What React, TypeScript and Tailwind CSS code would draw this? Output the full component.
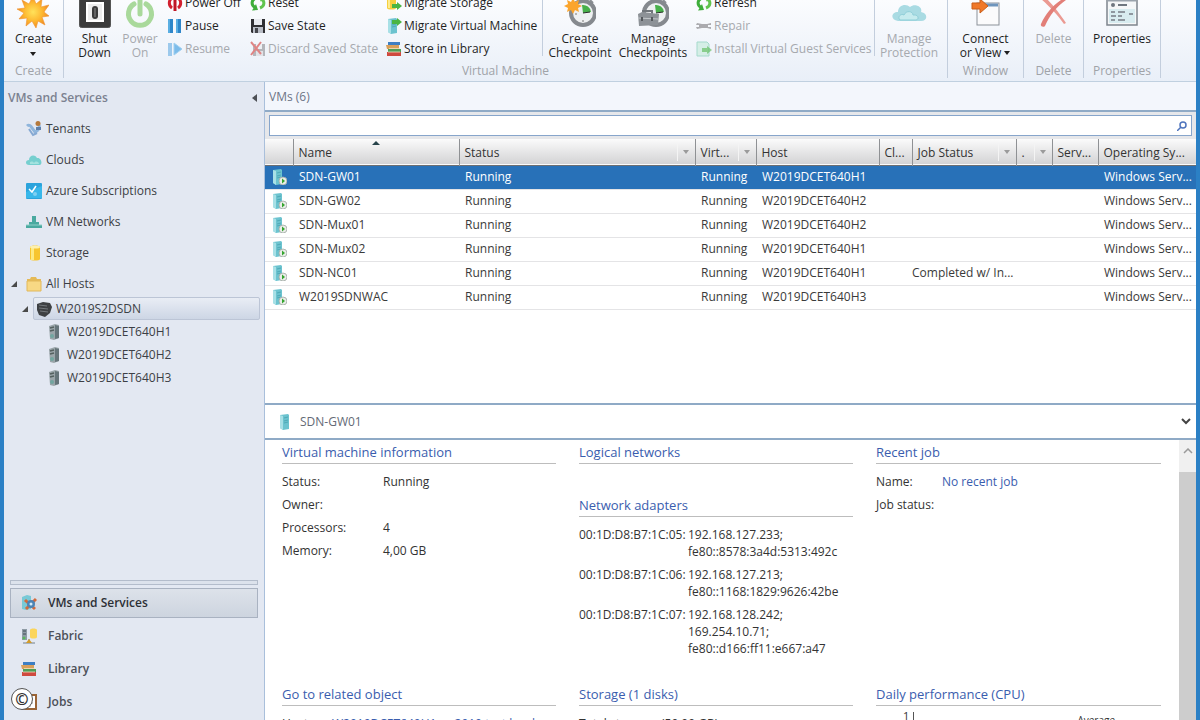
import { useState, type ReactNode } from 'react'

// ═══════════════════════════════════════════════════════════════════
// DATA
// ═══════════════════════════════════════════════════════════════════

const VMS = [
  { name: 'SDN-GW01', host: 'W2019DCET640H1', job: '' },
  { name: 'SDN-GW02', host: 'W2019DCET640H2', job: '' },
  { name: 'SDN-Mux01', host: 'W2019DCET640H2', job: '' },
  { name: 'SDN-Mux02', host: 'W2019DCET640H1', job: '' },
  { name: 'SDN-NC01', host: 'W2019DCET640H1', job: 'Completed w/ In...' },
  { name: 'W2019SDNWAC', host: 'W2019DCET640H3', job: '' },
]

const COLUMNS = [
  { label: '', width: 'w-[28px]', filter: false },
  { label: 'Name', width: 'w-[166px]', filter: false },
  { label: 'Status', width: 'w-[236px]', filter: true },
  { label: 'Virt...', width: 'w-[61px]', filter: true },
  { label: 'Host', width: 'w-[123px]', filter: false },
  { label: 'Cl...', width: 'w-[33px]', filter: false },
  { label: 'Job Status', width: 'w-[104px]', filter: true },
  { label: '.', width: 'w-[36px]', filter: true },
  { label: 'Serv...', width: 'w-[46px]', filter: false },
  { label: 'Operating Sy...', width: '', filter: false },
]

const ADAPTERS = [
  { mac: '00:1D:D8:B7:1C:05:', ips: ['192.168.127.233;', 'fe80::8578:3a4d:5313:492c'] },
  { mac: '00:1D:D8:B7:1C:06:', ips: ['192.168.127.213;', 'fe80::1168:1829:9626:42be'] },
  { mac: '00:1D:D8:B7:1C:07:', ips: ['192.168.128.242;', '169.254.10.71;', 'fe80::d166:ff11:e667:a47'] },
]

// ═══════════════════════════════════════════════════════════════════
// ICONS
// ═══════════════════════════════════════════════════════════════════

function Svg({ size = 16, children }: { size?: number; children: ReactNode }) {
  return (
    <svg width={size} height={size} viewBox={`0 0 ${size} ${size}`} fill="none" className="shrink-0" aria-hidden="true">
      {children}
    </svg>
  )
}

const STAR = 'M16 0l3 8 6-5-1 8 8-2-5 7 5 4-7 1 3 8-7-4-2 7-4-7-6 5 1-8-8 1 5-6-7-4 8-1-3-8 7 4z'

const CreateIcon = () => (
  <Svg size={32}>
    <defs>
      <radialGradient id="sun">
        <stop offset="0" stopColor="#ffe25a" />
        <stop offset="0.6" stopColor="#fdb62f" />
        <stop offset="1" stopColor="#f08a24" />
      </radialGradient>
    </defs>
    <path d={STAR} fill="url(#sun)" stroke="#f0932b" strokeWidth="0.6" />
  </Svg>
)

const ShutDownIcon = () => (
  <Svg size={32}>
    <rect x="0.5" y="0.5" width="31" height="31" rx="2" fill="#3b3b3b" stroke="#555" />
    <rect x="7" y="6" width="18" height="20" fill="#fff" />
    <rect x="9" y="8" width="14" height="16" fill="#ececec" />
    <rect x="13" y="10" width="6" height="13" rx="3" fill="#3a3a3a" />
    <path d="M16 12v9" stroke="#8a8a8a" />
  </Svg>
)

const PowerOnIcon = () => (
  <Svg size={32}>
    <path d="M10 8a11.500 11.500 0 1 0 12 0" stroke="#a9d99b" strokeWidth="5" strokeLinecap="round" />
    <path d="M16 4v14" stroke="#a9d99b" strokeWidth="5" strokeLinecap="round" />
  </Svg>
)

const PowerOffIcon = () => (
  <Svg>
    <path d="M5 3a6 6 0 0 0 0 10M11 3a6 6 0 0 1 0 10" stroke="#d2202f" strokeWidth="3" />
    <path d="M8 3v13" stroke="#c01626" strokeWidth="3" />
  </Svg>
)

const PauseIcon = () => (
  <Svg>
    <rect x="1" y="1" width="5" height="14" fill="#2f86c9" />
    <rect x="9" y="1" width="5" height="14" fill="#2f86c9" />
    <path d="M1 1h2v14H1zM9 1h2v14H9z" fill="#5aaee2" />
  </Svg>
)

const ResumeIcon = () => (
  <Svg>
    <rect x="1" y="2" width="4" height="13" fill="#9cc9ec" />
    <path d="M7 2l8 6-8 6z" fill="#7cbcea" stroke="#9fd0f0" />
  </Svg>
)

const RefreshIcon = () => (
  <Svg>
    <path d="M6 3C1 5 1 10 5 12.500" stroke="#3fae3a" strokeWidth="3" />
    <path d="M2 15.500l6-.5-2-6z" fill="#3fae3a" />
    <path d="M10 13c5-2 5-7 1-9.500" stroke="#62c44f" strokeWidth="3" />
    <path d="M14 .5L8 1l3 6z" fill="#62c44f" />
  </Svg>
)

const SaveIcon = () => (
  <Svg>
    <path d="M1 1h14v14H2l-1-1z" fill="#2f2f33" />
    <rect x="4" y="1" width="8" height="6" fill="#e7e9ee" />
    <rect x="3" y="9" width="10" height="6" fill="#b9bdc6" />
    <rect x="5" y="10" width="3" height="5" fill="#44464c" />
  </Svg>
)

const DiscardIcon = () => (
  <Svg>
    <path d="M3 3h12v12H3z" fill="#b4b6bb" />
    <rect x="6" y="3" width="6" height="5" fill="#eef0f4" />
    <rect x="6" y="10" width="7" height="5" fill="#e1e3e8" />
    <path d="M1 1l10 12M11 1L1 14" stroke="#e08484" strokeWidth="2" />
  </Svg>
)

const Arrow = ({ y = 4 }: { y?: number }) => (
  <path d={`M6 ${y + 2}h5v-2l5 4-5 4v-2H6z`} fill="#4bb543" />
)

const MigrateStorageIcon = () => (
  <Svg>
    <path d="M1 2c0-2 9-2 9 0v11c0 2-9 2-9 0z" fill="#f6cf3d" />
    <path d="M2 3h2v10H2z" fill="#fdeb8f" />
    <Arrow y={7} />
  </Svg>
)

const ServerBody = () => (
  <>
    <path d="M2 1l8-1 1 1v14l-6 1-3-2z" fill="#6cc3cf" />
    <path d="M2 1l3 1v14l-3-2z" fill="#a8e0e6" />
    <path d="M6 4l4-1M6 7l4-1M6 9l4-1" stroke="#4fa9b6" />
  </>
)

const MigrateVmIcon = () => (
  <Svg>
    <ServerBody />
    <Arrow y={0} />
  </Svg>
)

const VmIcon = () => (
  <Svg>
    <ServerBody />
    <circle cx="12" cy="12" r="4" fill="#e9ece8" stroke="#9fa8a2" strokeWidth="0.8" />
    <path d="M11 9.500l3 2.500-3 2.500z" fill="#35a52f" />
  </Svg>
)

const ServerIcon = () => (
  <Svg>
    <ServerBody />
  </Svg>
)

const BooksIcon = () => (
  <Svg>
    <path d="M2 1h12v3H2z" fill="#3d7fc4" />
    <path d="M0 4h13v4H1z" fill="#d9a05b" />
    <path d="M2 8h13v3H2z" fill="#4f9d57" />
    <path d="M1 11h14v4H1z" fill="#cf4a3f" />
    <path d="M3 7.500h11M2 11h12" stroke="#f0e3c4" strokeWidth="0.8" />
  </Svg>
)

const Stopwatch = () => (
  <>
    <path d="M16 1h5v3h-5zM26 4l3 3" stroke="#8b8f94" strokeWidth="2" />
    <circle cx="19" cy="17" r="12" fill="#eef0f1" stroke="#85898e" strokeWidth="4" />
    <path d="M19 17l-1-8a8 8 0 0 1 9 7z" fill="#48b04a" />
    <path d="M19 17l7-1" stroke="#2c2c2c" />
    <path d="M19 24v2M11 18h2" stroke="#777" />
  </>
)

const CreateCheckpointIcon = () => (
  <Svg size={32}>
    <Stopwatch />
    <path d="M9 2l2 4 4-2-1 4 4 2-4 2 1 4-4-2-2 4-2-4-4 2 1-4-4-2 4-2-1-4 4 2z" fill="#fba52c" />
  </Svg>
)

const ManageCheckpointsIcon = () => (
  <Svg size={32}>
    <Stopwatch />
    <path d="M6 18v-3h9v3" stroke="#71767b" strokeWidth="2" />
    <path d="M1 18l4-2 17 2-1 11-19 1z" fill="#8d9297" />
    <path d="M1 22l20 1" stroke="#c3c7ca" />
    <path d="M5 21v4M15 21v4" stroke="#55595d" strokeWidth="2" />
  </Svg>
)

const WrenchIcon = () => (
  <Svg>
    <path d="M1 5l5 1h5l4-1v2h-3v2h3v2l-4-1H6l-5 1-1-2h3V7H0z" fill="#ababaf" />
  </Svg>
)

const InstallIcon = () => (
  <Svg>
    <path d="M1 1h10l2 2v12H1z" fill="#d5eee6" stroke="#a5d9cc" />
    <g opacity="0.55">
      <Arrow y={5} />
    </g>
  </Svg>
)

const ManageProtectionIcon = () => (
  <Svg size={36}>
    <path d="M7 27c-8-1-7-9 0-9 0-7 8-9 12-5 5-4 13 0 11 5 7 1 7 9 0 9z" fill="#a9dbe3" />
    <path d="M9 26c-3-3 1-7 4-5 2-5 9-4 9 0 5-1 7 4 3 5z" fill="#c6ebee" stroke="#8fced8" />
  </Svg>
)

const ConnectIcon = () => (
  <Svg size={32}>
    <rect x="7" y="7" width="22" height="22" fill="#fbfbfc" stroke="#8b9199" />
    <path d="M8 9h20" stroke="#6e95bd" strokeWidth="3" />
    <path d="M2 7h8V3l8 7-8 7v-4H2z" fill="#f0792a" stroke="#c95f1b" />
  </Svg>
)

const DeleteIcon = () => (
  <Svg size={32}>
    <path d="M4 3l4-2c6 6 13 14 21 26l-2 1C20 18 11 9 4 3z" fill="#eb9a92" />
    <path d="M27 2l2 2C19 11 13 19 8 30c-2 2-5 0-4-2C9 17 16 9 27 2z" fill="#e27f78" />
  </Svg>
)

const PropertiesIcon = () => (
  <Svg size={32}>
    <rect x="1" y="1" width="30" height="28" fill="#f5f7f8" stroke="#7e858d" strokeWidth="1.500" />
    <path d="M2 4h28" stroke="#9aa3ac" strokeWidth="3" />
    <circle cx="7" cy="9" r="2" fill="#6f7780" />
    <path d="M12 9h9" stroke="#6f7780" strokeWidth="2" />
    <rect x="3" y="13" width="26" height="14" fill="#d8ecf0" />
    <path d="M5 16h4M12 16h7M23 18h4M5 20h5M12 20h4M5 24h4M12 24h7" stroke="#8e979f" strokeWidth="2" />
  </Svg>
)

const TenantsIcon = () => (
  <Svg>
    <path d="M1 5c2-2 4 0 5 2l3 4c3-1 5-4 4-7" stroke="#8fb5dc" strokeWidth="3" />
    <path d="M3 8l4 6 4-2" stroke="#86a9d3" strokeWidth="2" />
    <circle cx="12" cy="2.500" r="2.500" fill="#b5793c" />
    <path d="M10 6h5v3h-5z" fill="#5f80ab" />
  </Svg>
)

const CloudIcon = () => (
  <Svg>
    <path d="M3 13c-4 0-4-5 0-5 0-5 6-6 8-2 4-1 6 6 3 7z" fill="#76cfcf" />
    <path d="M4 12c-1-3 3-3 4-1 2-3 5-1 5 1z" fill="#a3e2df" />
  </Svg>
)

const AzureIcon = () => (
  <Svg>
    <rect width="16" height="16" rx="1" fill="#2ba3dc" />
    <path d="M0 9l16-6v12H0z" fill="#38b7ea" />
    <path d="M3 6l3 3 4-6" stroke="#fff" strokeWidth="1.500" />
    <circle cx="9" cy="11" r="2" fill="#7fd0f2" />
  </Svg>
)

const NetworkIcon = () => (
  <Svg>
    <path d="M6 2h4v6h3v3h3v3H0v-3h3V8h3z" fill="#4aa9a0" />
    <path d="M0 11h16" stroke="#8fd0c8" />
  </Svg>
)

const StorageIcon = () => (
  <Svg>
    <path d="M4 2c0-2 10-2 10 0v12c0 2-10 2-10 0z" fill="#f7c52f" />
    <path d="M5 3h3v12H5z" fill="#fdea83" />
    <ellipse cx="9" cy="2" rx="5" ry="1.500" fill="#fdf0ae" />
  </Svg>
)

const FolderIcon = () => (
  <Svg>
    <path d="M1 3h3l1-2h5l1 2h4v12H1z" fill="#e5ba57" />
    <path d="M1 5h14v10H1z" fill="#f8d884" stroke="#e2b85a" />
  </Svg>
)

const ClusterIcon = () => (
  <Svg>
    <path d="M1 3l6-2 7 1 2 4-2 6-5 4-6-2-2-5z" fill="#3d4043" />
    <path d="M3 4l8 1M3 7l9 1M4 10l8 1" stroke="#74797d" />
  </Svg>
)

const HostIcon = () => (
  <Svg>
    <path d="M3 2l6-2 4 1v13l-5 2-4-1z" fill="#9aa5a9" />
    <path d="M9 1l4 1v12l-4 1z" fill="#66757a" />
    <path d="M4 4l4-1M4 7l4-1" stroke="#54605f" strokeWidth="1.500" />
    <circle cx="6" cy="12" r="2" fill="#72a6a0" />
  </Svg>
)

const VmsNavIcon = () => (
  <Svg>
    <path d="M1 2l5-2 4 1v13l-5 1-4-1z" fill="#78c9d6" />
    <path d="M4 5l10 9M15 4L5 14" stroke="#d4693a" strokeWidth="3" />
    <circle cx="10" cy="9" r="4" fill="#4d84b5" />
    <circle cx="10" cy="9" r="1.500" fill="#d9ecf8" />
  </Svg>
)

const FabricIcon = () => (
  <Svg>
    <path d="M1 1h5v11H1z" fill="#8f9ba5" />
    <path d="M2 3h3M2 6h3" stroke="#3f4b55" />
    <circle cx="3" cy="10" r="1.500" fill="#59b65b" />
    <path d="M9 2c0-2 7-2 7 0v7c0 2-7 2-7 0z" fill="#fbd55c" />
    <path d="M2 15h12M8 11v4" stroke="#72808a" />
    <path d="M5 15l3-4 3 4z" fill="#d39b28" />
  </Svg>
)

const JobsIcon = () => (
  <Svg>
    <rect x="2" y="1" width="13" height="14" fill="#fff" stroke="#9a6437" strokeWidth="2" />
    <path d="M6 6h6M6 9h6M6 12h4" stroke="#a8a8a8" />
  </Svg>
)

const TreeArrow = () => (
  <svg width="8" height="8" viewBox="0 0 8 8" className="shrink-0" aria-hidden="true">
    <path d="M7 1v6H1z" fill="#4a4a4a" />
  </svg>
)

const DownArrow = ({ fill }: { fill: string }) => (
  <svg width="8" height="4" viewBox="0 0 8 4" className="inline-block shrink-0" aria-hidden="true">
    <path d="M1 0h6L4 4z" fill={fill} />
  </svg>
)

// ═══════════════════════════════════════════════════════════════════
// RIBBON
// ═══════════════════════════════════════════════════════════════════

type ButtonProps = { icon: ReactNode; children: ReactNode; disabled?: boolean }

function LargeButton({ icon, children, disabled }: ButtonProps) {
  return (
    <button
      type="button"
      disabled={disabled}
      className="flex h-16 flex-col items-center whitespace-nowrap leading-[14px] text-[#1f1f1f] disabled:text-[#a6a9ae]"
    >
      <span className="mb-1 flex h-8 items-center">{icon}</span>
      {children}
    </button>
  )
}

function SmallButton({ icon, children, disabled }: ButtonProps) {
  return (
    <button
      type="button"
      disabled={disabled}
      className="flex h-[23px] items-center gap-[2px] whitespace-nowrap text-[#1f1f1f] disabled:text-[#a6a9ae]"
    >
      {icon}
      {children}
    </button>
  )
}

function Group({ label, children }: { label: string; children: ReactNode }) {
  return (
    <div className="flex flex-col border-r border-[#c3cedd] px-2">
      <div className="flex h-[70px] items-end justify-center pb-1">{children}</div>
      <div className="h-[14px] text-center leading-[14px] text-[#a0a3a8]">{label}</div>
    </div>
  )
}

const Divider = () => <div className="mx-1 mb-1 h-16 w-px bg-[#c3cedd]" />

function Ribbon() {
  return (
    <div className="flex h-[82px] shrink-0 items-end overflow-hidden border-b border-[#c0d0e0] bg-linear-to-b from-[#fbfcfe] to-[#e9eff8] pb-[3px]">
      <Group label="Create">
        <div className="flex w-[43px] justify-center">
          <LargeButton icon={<CreateIcon />}>
            <span>Create</span>
            <span className="h-[14px]"><DownArrow fill="#1f1f1f" /></span>
          </LargeButton>
        </div>
      </Group>
      <Group label="Virtual Machine">
        <div className="flex w-[45px] justify-center">
          <LargeButton icon={<ShutDownIcon />}><span>Shut</span><span>Down</span></LargeButton>
        </div>
        <div className="flex w-[46px] justify-center">
          <LargeButton icon={<PowerOnIcon />} disabled><span>Power</span><span>On</span></LargeButton>
        </div>
        <div className="ml-1 w-[83px]">
          <SmallButton icon={<PowerOffIcon />}>Power Off</SmallButton>
          <SmallButton icon={<PauseIcon />}>Pause</SmallButton>
          <SmallButton icon={<ResumeIcon />} disabled>Resume</SmallButton>
        </div>
        <div className="w-[136px]">
          <SmallButton icon={<RefreshIcon />}>Reset</SmallButton>
          <SmallButton icon={<SaveIcon />}>Save State</SmallButton>
          <SmallButton icon={<DiscardIcon />} disabled>Discard Saved State</SmallButton>
        </div>
        <div className="w-[152px]">
          <SmallButton icon={<MigrateStorageIcon />}>Migrate Storage</SmallButton>
          <SmallButton icon={<MigrateVmIcon />}>Migrate Virtual Machine</SmallButton>
          <SmallButton icon={<BooksIcon />}>Store in Library</SmallButton>
        </div>
        <Divider />
        <div className="flex w-[66px] justify-center">
          <LargeButton icon={<CreateCheckpointIcon />}><span>Create</span><span>Checkpoint</span></LargeButton>
        </div>
        <div className="flex w-20 justify-center">
          <LargeButton icon={<ManageCheckpointsIcon />}><span>Manage</span><span>Checkpoints</span></LargeButton>
        </div>
        <div className="ml-[3px] w-[174px]">
          <SmallButton icon={<RefreshIcon />}>Refresh</SmallButton>
          <SmallButton icon={<WrenchIcon />} disabled>Repair</SmallButton>
          <SmallButton icon={<InstallIcon />} disabled>Install Virtual Guest Services</SmallButton>
        </div>
        <Divider />
        <div className="flex w-[60px] justify-center">
          <LargeButton icon={<ManageProtectionIcon />} disabled><span>Manage</span><span>Protection</span></LargeButton>
        </div>
      </Group>
      <Group label="Window">
        <div className="flex w-[59px] justify-center">
          <LargeButton icon={<ConnectIcon />}>
            <span>Connect</span>
            <span className="flex items-center gap-[2px]">or View <DownArrow fill="#1f1f1f" /></span>
          </LargeButton>
        </div>
      </Group>
      <Group label="Delete">
        <div className="flex w-[43px] justify-center">
          <LargeButton icon={<DeleteIcon />} disabled>Delete</LargeButton>
        </div>
      </Group>
      <Group label="Properties">
        <div className="flex w-[60px] justify-center">
          <LargeButton icon={<PropertiesIcon />}>Properties</LargeButton>
        </div>
      </Group>
    </div>
  )
}

// ═══════════════════════════════════════════════════════════════════
// SIDEBAR
// ═══════════════════════════════════════════════════════════════════

const PLACES = [
  { label: 'Tenants', icon: <TenantsIcon /> },
  { label: 'Clouds', icon: <CloudIcon /> },
  { label: 'Azure Subscriptions', icon: <AzureIcon /> },
  { label: 'VM Networks', icon: <NetworkIcon /> },
  { label: 'Storage', icon: <StorageIcon /> },
]

const HOSTS = ['W2019DCET640H1', 'W2019DCET640H2', 'W2019DCET640H3']

const WORKSPACES = [
  { label: 'VMs and Services', icon: <VmsNavIcon /> },
  { label: 'Fabric', icon: <FabricIcon /> },
  { label: 'Library', icon: <BooksIcon /> },
  { label: 'Jobs', icon: <JobsIcon /> },
]

function Sidebar() {
  const [workspace, setWorkspace] = useState('VMs and Services')

  return (
    <aside className="flex w-[260px] shrink-0 flex-col bg-[#e3e8f2] text-[#3c3f45]">
      <div className="flex h-[31px] items-center justify-between px-1 font-semibold text-[#7b8190]">
        VMs and Services
        <button type="button" aria-label="Collapse pane" className="px-[2px]">
          <svg width="6" height="8" viewBox="0 0 6 8"><path d="M5 0v8L0 4z" fill="#4c4f55" /></svg>
        </button>
      </div>
      <ul>
        {PLACES.map(place => (
          <li key={place.label} className="flex h-[31px] items-center gap-1 pl-[22px]">
            {place.icon}
            {place.label}
          </li>
        ))}
        <li className="pt-[3px]">
          <div className="flex h-[26px] items-center gap-1 pl-[6px]">
            <span className="w-3"><TreeArrow /></span>
            <FolderIcon />
            All Hosts
          </div>
          <div className="flex items-center gap-1 pl-[17px] pr-1">
            <TreeArrow />
            <div className="flex h-[23px] flex-1 items-center gap-1 rounded-[2px] border border-[#bcc5d6] bg-linear-to-b from-[#e9edf5] to-[#cdd6e5] pl-[2px]">
              <ClusterIcon />
              W2019S2DSDN
            </div>
          </div>
          <ul>
            {HOSTS.map(host => (
              <li key={host} className="flex h-[23px] items-center gap-[5px] pl-[42px]">
                <HostIcon />
                {host}
              </li>
            ))}
          </ul>
        </li>
      </ul>

      <nav className="mt-auto flex flex-col gap-[3px] px-[6px] pb-[3px]">
        <div className="h-[5px] border border-[#b3bccb] bg-[#dce2ec]" />
        {WORKSPACES.map(item => (
          <button
            key={item.label}
            type="button"
            onClick={() => setWorkspace(item.label)}
            className={`relative flex h-[30px] items-center gap-[11px] border pl-[10px] font-semibold ${
              workspace === item.label
                ? 'border-[#a9b2c1] bg-linear-to-b from-[#dde2ea] to-[#cdd4df] text-[#2d3036]'
                : 'border-transparent text-[#4d5159]'
            }`}
          >
            {item.icon}
            {item.label}
            {item.label === 'Jobs' && (
              <span className="absolute left-0 top-0 flex size-[22px] items-center justify-center rounded-full border border-[#555] bg-white text-[16px] font-bold leading-none text-[#333]">
                ©
              </span>
            )}
          </button>
        ))}
      </nav>
    </aside>
  )
}

// ═══════════════════════════════════════════════════════════════════
// VM LIST
// ═══════════════════════════════════════════════════════════════════

function VmTable({ selected, onSelect }: { selected: string; onSelect: (name: string) => void }) {
  return (
    <table className="w-full table-fixed border-collapse text-left">
      <thead>
        <tr className="h-[26px] border-b border-[#6d6f73] bg-linear-to-b from-[#fbfbfb] to-[#d3d3d5] text-[#333]">
          {COLUMNS.map((col, i) => (
            <th
              key={i}
              className={`relative overflow-hidden whitespace-nowrap border-r border-[#8f9194] p-0 pl-[5px] pt-[2px] font-normal last:border-r-0 ${col.width}`}
            >
              {col.label}
              {col.label === 'Name' && (
                <svg width="8" height="4" viewBox="0 0 8 4" className="absolute left-1/2 top-[2px] -ml-1" aria-hidden="true">
                  <path d="M0 4h8L4 0z" fill="#27434a" />
                </svg>
              )}
              {col.filter && (
                <span className="absolute inset-y-1 right-0 flex w-[18px] items-center justify-center border-l border-[#f4f4f4]">
                  <DownArrow fill="#9b9b9b" />
                </span>
              )}
            </th>
          ))}
        </tr>
      </thead>
      <tbody>
        {VMS.map(vm => (
          <tr
            key={vm.name}
            onClick={() => onSelect(vm.name)}
            className={`h-6 border-b border-[#e4e4e6] *:overflow-hidden *:whitespace-nowrap *:p-0 *:pl-[6px] ${
              vm.name === selected ? 'bg-[#2871b8] text-white' : 'text-[#3a3a3a]'
            }`}
          >
            <td><VmIcon /></td>
            <td>{vm.name}</td>
            <td>Running</td>
            <td>Running</td>
            <td>{vm.host}</td>
            <td />
            <td className="pl-0!">{vm.job}</td>
            <td />
            <td />
            <td>Windows Serv...</td>
          </tr>
        ))}
      </tbody>
    </table>
  )
}

// ═══════════════════════════════════════════════════════════════════
// DETAILS
// ═══════════════════════════════════════════════════════════════════

const Heading = ({ children }: { children: ReactNode }) => (
  <h3 className="h-[22px] border-b border-[#bdbdbd] text-[13px] leading-[20px] text-[#3a5dae]">{children}</h3>
)

function Field({ label, width, children }: { label: string; width: string; children?: ReactNode }) {
  return (
    <div className="flex h-[23px] items-center whitespace-nowrap">
      <dt className={width}>{label}</dt>
      <dd>{children}</dd>
    </div>
  )
}

function Details() {
  return (
    <div className="flex min-h-0 flex-1 overflow-hidden text-[#333]">
      <div className="grid flex-1 grid-cols-[274fr_274fr_285fr] grid-rows-[242px_auto] content-start gap-x-[23px] pl-[17px] pr-[18px] pt-[2px]">
        <section>
          <Heading>Virtual machine information</Heading>
          <dl className="pt-[6px]">
            <Field label="Status:" width="w-[101px]">Running</Field>
            <Field label="Owner:" width="w-[101px]" />
            <Field label="Processors:" width="w-[101px]">4</Field>
            <Field label="Memory:" width="w-[101px]">4,00 GB</Field>
          </dl>
        </section>
        <section>
          <Heading>Logical networks</Heading>
          <div className="h-[31px]" />
          <Heading>Network adapters</Heading>
          <dl className="flex flex-col gap-[6px] pt-[9px] leading-[17px]">
            {ADAPTERS.map(adapter => (
              <div key={adapter.mac} className="flex whitespace-nowrap">
                <dt className="w-[109px]">{adapter.mac}</dt>
                <dd>{adapter.ips.map(ip => <div key={ip}>{ip}</div>)}</dd>
              </div>
            ))}
          </dl>
        </section>
        <section>
          <Heading>Recent job</Heading>
          <dl className="pt-[6px]">
            <Field label="Name:" width="w-[66px]"><a href="#job" className="text-[#3a5dae]">No recent job</a></Field>
            <Field label="Job status:" width="w-[66px]" />
          </dl>
        </section>

        <section>
          <Heading>Go to related object</Heading>
          <dl className="pt-[6px]">
            <Field label="Host:" width="w-[50px]">
              <a href="#host" className="text-[#3a5dae]">W2019DCET640H1.ws2019.test.local</a>
            </Field>
          </dl>
        </section>
        <section>
          <Heading>Storage (1 disks)</Heading>
          <dl className="pt-[6px]">
            <Field label="Total storage:" width="w-[82px]">(50,00 GB)</Field>
          </dl>
        </section>
        <section>
          <Heading>Daily performance (CPU)</Heading>
          <div className="flex items-start pl-[27px] pr-[46px] pt-[2px] text-[11px] leading-[16px]">
            <span>1</span>
            <span className="ml-1 mt-1 h-10 w-px bg-[#555]" />
            <span className="ml-auto pt-1 text-[10px]">Average</span>
          </div>
        </section>
      </div>
      <div className="w-[17px] shrink-0 bg-[#cdcdcd]">
        <button type="button" aria-label="Scroll up" className="flex h-8 w-full justify-center bg-[#f0f0f0] pt-2">
          <svg width="10" height="6" viewBox="0 0 10 6" fill="none"><path d="M1 5l4-4 4 4" stroke="#9a9a9a" strokeWidth="1.500" /></svg>
        </button>
      </div>
    </div>
  )
}

export default function App() {
  const [selected, setSelected] = useState('SDN-GW01')

  return (
    <div className="flex h-screen flex-col overflow-hidden border-x-4 border-[#2b80c5] bg-[#f3f6fc] font-['Open_Sans','Noto_Sans',sans-serif] text-[12px] leading-[18px]">
      <Ribbon />
      <div className="flex min-h-0 flex-1">
        <Sidebar />
        <main className="flex min-w-0 flex-1 flex-col border-l border-[#a9bfdb]">
          <div className="flex h-7 shrink-0 items-center px-1 pt-[2px] text-[#6d7486]">VMs (6)</div>
          <div className="h-[295px] shrink-0 border-b-2 border-t-2 border-[#8faac6] bg-white">
            <div className="bg-[#e6e7ea] px-1 py-[3px]">
              <label className="flex h-[21px] items-center border border-[#87a5cb] bg-white pr-1">
                <span className="sr-only">Search virtual machines</span>
                <input type="search" className="h-full min-w-0 flex-1 px-1 outline-none" />
                <svg width="10" height="10" viewBox="0 0 10 10" fill="none" aria-hidden="true">
                  <circle cx="6" cy="4" r="3" stroke="#4f74bd" strokeWidth="1.500" />
                  <path d="M4 6L0 10" stroke="#4f74bd" strokeWidth="1.500" />
                </svg>
              </label>
            </div>
            <VmTable selected={selected} onSelect={setSelected} />
          </div>
          <div className="flex min-h-0 flex-1 flex-col bg-white">
            <div className="flex h-[35px] shrink-0 items-center gap-[6px] border-b-2 border-[#8faac6] pl-[13px] pr-[5px] text-[#646a76]">
              <ServerIcon />
              {selected}
              <button type="button" aria-label="Collapse details" className="ml-auto">
                <svg width="10" height="7" viewBox="0 0 10 7" fill="none"><path d="M1 1l4 4 4-4" stroke="#444" strokeWidth="2" /></svg>
              </button>
            </div>
            <Details />
          </div>
        </main>
      </div>
    </div>
  )
}
